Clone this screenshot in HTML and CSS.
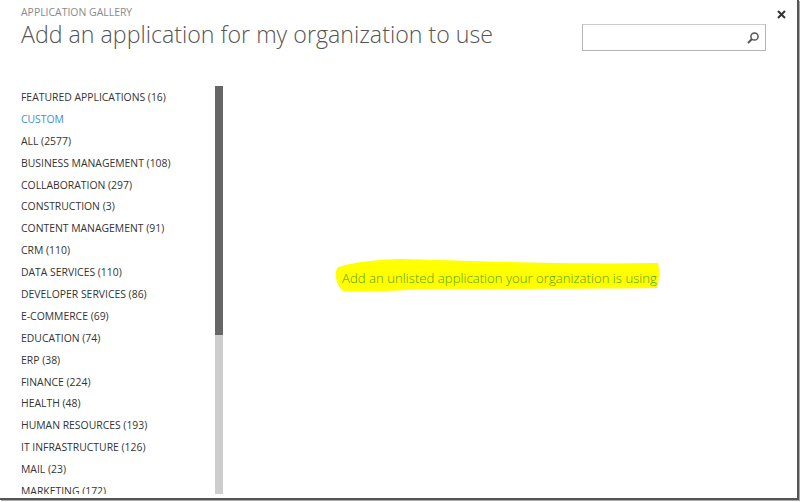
FILE: index.html
```html
<!DOCTYPE html>
<html lang="en">
<head>
    <meta charset="UTF-8">
    <meta name="viewport" content="width=device-width, initial-scale=1.0">
    <title>Application Gallery</title>
    <link rel="stylesheet" href="styles.css">
</head>
<body>
    <div class="dialog">
        <div class="header">
            <div class="heading">
                <div class="eyebrow">APPLICATION GALLERY</div>
                <h1>Add an application for my organization to use</h1>
            </div>
            <div class="search">
                <svg class="search-icon" width="14" height="14" viewBox="0 0 14 14">
                    <circle cx="8.5" cy="5.5" r="3.6" fill="none" stroke="#555" stroke-width="1.5"/>
                    <path d="M6 8 L2 12" stroke="#555" stroke-width="2"/>
                </svg>
            </div>
            <svg class="close" width="9" height="9" viewBox="0 0 9 9">
                <path d="M1 1 L8 8 M8 1 L1 8" stroke="#333" stroke-width="2"/>
            </svg>
        </div>
        <div class="content">
            <div class="sidebar">
                <ul class="categories">
                    <li>FEATURED APPLICATIONS (16)</li>
                    <li class="active">CUSTOM</li>
                    <li>ALL (2577)</li>
                    <li>BUSINESS MANAGEMENT (108)</li>
                    <li>COLLABORATION (297)</li>
                    <li>CONSTRUCTION (3)</li>
                    <li>CONTENT MANAGEMENT (91)</li>
                    <li>CRM (110)</li>
                    <li>DATA SERVICES (110)</li>
                    <li>DEVELOPER SERVICES (86)</li>
                    <li>E-COMMERCE (69)</li>
                    <li>EDUCATION (74)</li>
                    <li>ERP (38)</li>
                    <li>FINANCE (224)</li>
                    <li>HEALTH (48)</li>
                    <li>HUMAN RESOURCES (193)</li>
                    <li>IT INFRASTRUCTURE (126)</li>
                    <li>MAIL (23)</li>
                    <li>MARKETING (172)</li>
                </ul>
                <div class="scrollbar">
                    <div class="thumb"></div>
                </div>
            </div>
            <div class="main">
                <div class="marked">
                    <svg class="marker" width="326" height="34" viewBox="0 0 326 34">
                        <path d="M3 10 C8 7 30 2 65 1 C120 2 220 7 324 5 C326 12 325 24 323 30 C250 31 150 31 90 31 C60 33 30 34 9 33 C3 28 0 18 3 10 Z" fill="#ffff00"/>
                    </svg>
                    <span class="marked-text">Add an unlisted application your organization is using</span>
                </div>
            </div>
        </div>
    </div>
</body>
</html>
```

FILE: styles.css
```css
html, body {
    margin: 0;
    height: 100%;
    background-color: #fff;
    overflow: hidden;
}
body {
    font-family: "Open Sans", "Noto Sans", sans-serif;
}
.dialog {
    width: 797px;
    height: 498px;
    background: #fff;
    border-right: 2px solid #555;
    border-bottom: 2px solid #555;
    box-shadow: 1px 1px 0 #aaa;
    display: flex;
    flex-direction: column;
    overflow: hidden;
}
.header {
    height: 86px;
    flex: none;
    display: flex;
    align-items: flex-start;
    padding-left: 21px;
}
.heading {
    width: 561px;
}
.eyebrow {
    margin-top: 5px;
    font-size: 10.45px;
    line-height: 14px;
    color: #8a8a8a;
}
h1 {
    margin: 0;
    font-size: 23.2px;
    line-height: 30px;
    font-weight: 300;
    color: #555;
    white-space: nowrap;
}
.search {
    width: 184px;
    height: 27px;
    margin-top: 24px;
    box-sizing: border-box;
    border: 1px solid #b5b5b5;
    border-top-color: #ccc;
    display: flex;
    align-items: center;
    justify-content: flex-end;
    padding-right: 5px;
}
.close {
    margin: 10px 0 0 11px;
}
.content {
    flex: 1;
    min-height: 0;
    display: flex;
    padding-bottom: 4px;
}
.sidebar {
    width: 223px;
    flex: none;
    display: flex;
    padding-left: 21px;
    box-sizing: border-box;
}
.categories {
    list-style: none;
    margin: 0;
    padding: 1px 0 0;
    width: 194px;
    overflow: hidden;
    font-size: 10.4px;
    color: #333;
}
.categories li {
    height: 21.9px;
    line-height: 20px;
    white-space: nowrap;
}
.categories .active {
    color: #3f8fd2;
}
.scrollbar {
    width: 8px;
    background: #cdcdcd;
}
.thumb {
    height: 249px;
    background: #666;
}
.main {
    flex: 1;
    display: flex;
    justify-content: center;
    padding-top: 176px;
    padding-right: 21px;
    align-items: flex-start;
}
.marked {
    position: relative;
    padding: 4px 0;
}
.marker {
    position: absolute;
    left: -8px;
    top: -4px;
}
.marked-text {
    position: relative;
    font-size: 13.18px;
    line-height: 20px;
    font-weight: 300;
    color: #4f9f10;
    white-space: nowrap;
}
```
